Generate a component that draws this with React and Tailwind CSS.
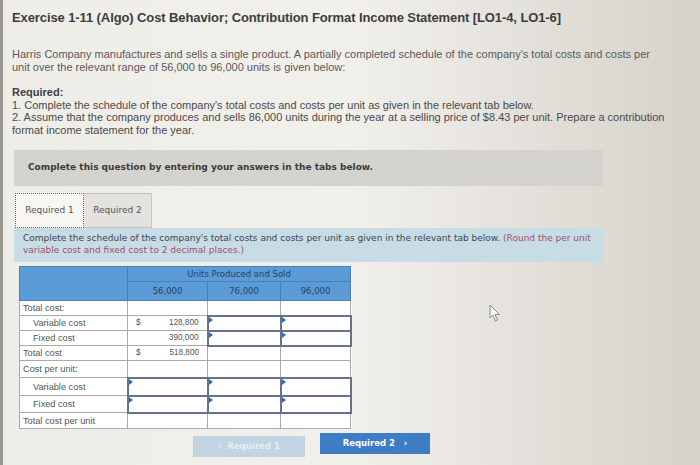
import React from "react";

const sans = { fontFamily: '"Liberation Sans", Arial, sans-serif' };
const verdana = { fontFamily: '"DejaVu Sans", Verdana, sans-serif' };

function InputMark() {
  return (
    <span className="absolute left-0 top-0 w-0 h-0 border-t-[3px] border-t-transparent border-b-[3px] border-b-transparent border-l-[4px] border-l-[#2f6fb8]" />
  );
}

function Cell({ input, children, className = "" }) {
  return (
    <td
      className={`relative p-0 ${input ? "border-2 border-[#66718a]" : "border border-[#a9a9a9]"} ${className}`}
    >
      {input && <InputMark />}
      {children}
    </td>
  );
}

function Money({ sign, value }) {
  return (
    <div className="flex justify-between px-[8px] text-[8.2px] text-[#555]">
      <span>{sign ? "$" : ""}</span>
      <span>{value}</span>
    </div>
  );
}

export default function App() {
  const rows = [
    { label: "Total cost:", indent: false, h: "h-[15px]", c1: null, inputs: [false, false, false] },
    { label: "Variable cost", indent: true, h: "h-[15px]", c1: { sign: true, value: "128,800" }, inputs: [false, true, true] },
    { label: "Fixed cost", indent: true, h: "h-[15px]", c1: { sign: false, value: "390,000" }, inputs: [false, true, true] },
    { label: "Total cost", indent: false, h: "h-[15px]", c1: { sign: true, value: "518,800" }, inputs: [false, false, false] },
    { label: "Cost per unit:", indent: false, h: "h-[17px]", c1: null, inputs: [false, false, false] },
    { label: "Variable cost", indent: true, h: "h-[18px]", c1: null, inputs: [true, true, true] },
    { label: "Fixed cost", indent: true, h: "h-[17px]", c1: null, inputs: [true, true, true] },
    { label: "Total cost per unit", indent: false, h: "h-[16px]", c1: null, inputs: [false, false, false] },
  ];

  return (
    <div
      className="relative w-[700px] h-[465px] overflow-hidden bg-gradient-to-r from-[#efede8] via-[#f2f0eb] to-[#d5d2cb] border-l-[3px] border-[#9a9893]"
      style={sans}
    >
      <div className="pl-[9px] pr-3 pt-[10px]">
        <h1 className="text-[13px] leading-[15px] font-bold text-[#3d3d3d] tracking-[-0.1px]">
          Exercise 1-11 (Algo) Cost Behavior; Contribution Format Income Statement [LO1-4, LO1-6]
        </h1>

        <p className="mt-[23px] w-[640px] text-[11px] leading-[12.5px] text-[#5a5a5a]">
          Harris Company manufactures and sells a single product. A partially completed schedule of the company's total costs and costs per unit over the relevant range of 56,000 to 96,000 units is given below:
        </p>

        <div className="mt-[13px] w-[662px] text-[11px] leading-[12.5px] text-[#4a4a4a]">
          <div className="font-bold text-[#3f3f3f]">Required:</div>
          <div>1. Complete the schedule of the company's total costs and costs per unit as given in the relevant tab below.</div>
          <div>2. Assume that the company produces and sells 86,000 units during the year at a selling price of $8.43 per unit. Prepare a contribution format income statement for the year.</div>
        </div>

        <div className="mt-[14px] ml-[2px] w-[589px] h-[36px] bg-[#d3d2cd] flex items-center pl-[14px]" style={verdana}>
          <span className="text-[9px] font-bold text-[#3b3b3b]">
            Complete this question by entering your answers in the tabs below.
          </span>
        </div>

        <div className="mt-[7px] ml-[3px] flex" style={verdana}>
          <div className="w-[69px] h-[35px] bg-[#f7f6f2] border border-dotted border-[#666] flex items-center justify-center text-[9px] text-[#555]">
            Required 1
          </div>
          <div className="w-[68px] h-[35px] bg-[#e3e2de] border border-[#c4c3bf] border-l-0 flex items-center justify-center text-[9px] text-[#555]">
            Required 2
          </div>
        </div>

        <div className="ml-[2px] w-[589px] h-[34px] bg-[#c8dce5] px-[9px] pt-[4px] text-[9px] leading-[12px] text-[#3c4650]" style={verdana}>
          <div className="whitespace-nowrap">
            Complete the schedule of the company's total costs and costs per unit as given in the relevant tab below.{" "}
            <span className="text-[#a0506a]">(Round the per unit</span>
          </div>
          <div className="text-[#a0506a]">variable cost and fixed cost to 2 decimal places.)</div>
        </div>

        <table className="mt-[4px] ml-[7px] border-collapse bg-white" style={sans}>
          <colgroup>
            <col className="w-[108px]" />
            <col className="w-[80px]" />
            <col className="w-[73px]" />
            <col className="w-[70px]" />
          </colgroup>
          <thead style={verdana}>
            <tr className="h-[15px] bg-[#5b9bd8]">
              <th className="border border-[#4a7fb5]" rowSpan={2} />
              <th colSpan={3} className="border border-[#4a7fb5] text-[8.5px] font-normal text-[#26425f]">
                Units Produced and Sold
              </th>
            </tr>
            <tr className="h-[19px] bg-[#5b9bd8]">
              <th className="border border-[#4a7fb5] text-[8.5px] font-normal text-[#26425f]">56,000</th>
              <th className="border border-[#4a7fb5] text-[8.5px] font-normal text-[#26425f]">76,000</th>
              <th className="border border-[#4a7fb5] text-[8.5px] font-normal text-[#26425f]">96,000</th>
            </tr>
          </thead>
          <tbody>
            {rows.map((r, i) => (
              <tr key={i} className={r.h}>
                <td className={`border border-[#a9a9a9] text-[9.2px] leading-[10px] text-[#555] ${r.indent ? "pl-[13px]" : "pl-[3px]"}`}>
                  {r.label}
                </td>
                <Cell input={r.inputs[0]}>{r.c1 && <Money sign={r.c1.sign} value={r.c1.value} />}</Cell>
                <Cell input={r.inputs[1]} />
                <Cell input={r.inputs[2]} />
              </tr>
            ))}
          </tbody>
        </table>

        <div className="mt-[4px] ml-[181px] flex items-start gap-[15px]" style={verdana}>
          <div className="mt-[3px] w-[112px] h-[21px] bg-[#c2d3e2] flex items-center justify-center text-[8.5px] font-bold text-[#e6eef5]">
            &lsaquo;&nbsp;&nbsp;Required 1
          </div>
          <div className="w-[110px] h-[21px] bg-[#3c7dc6] flex items-center justify-center text-[8.5px] font-bold text-white">
            Required 2&nbsp;&nbsp;&nbsp;&rsaquo;
          </div>
        </div>
      </div>

      <svg className="absolute left-[486px] top-[304px]" width="13" height="19" viewBox="0 0 13 19">
        <path
          d="M1 1 L1 14 L4 11 L6.5 17 L8.5 16 L6 10.5 L10.5 10.5 Z"
          fill="#fafafa"
          stroke="#8a8a8a"
          strokeWidth="1"
          strokeLinejoin="round"
        />
      </svg>
    </div>
  );
}
